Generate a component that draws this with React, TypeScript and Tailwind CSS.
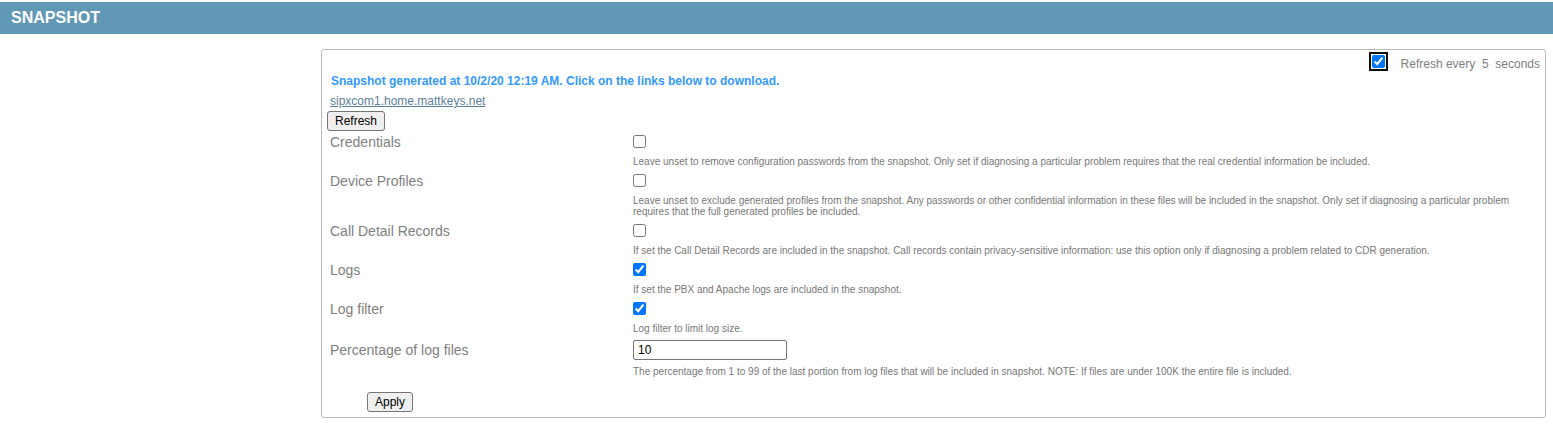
import React, { useState } from "react";

type Option = { id: string; label: string; help: string; checked: boolean };

const options: Option[] = [
  { id: "credentials", label: "Credentials", checked: false, help: "Leave unset to remove configuration passwords from the snapshot. Only set if diagnosing a particular problem requires that the real credential information be included." },
  { id: "profiles", label: "Device Profiles", checked: false, help: "Leave unset to exclude generated profiles from the snapshot. Any passwords or other confidential information in these files will be included in the snapshot. Only set if diagnosing a particular problem requires that the full generated profiles be included." },
  { id: "cdr", label: "Call Detail Records", checked: false, help: "If set the Call Detail Records are included in the snapshot. Call records contain privacy-sensitive information: use this option only if diagnosing a problem related to CDR generation." },
  { id: "logs", label: "Logs", checked: true, help: "If set the PBX and Apache logs are included in the snapshot." },
  { id: "filter", label: "Log filter", checked: true, help: "Log filter to limit log size." },
];

const button = "h-5 rounded-[3px] border border-[#767676] bg-[#efefef] px-[7px] text-xs leading-none text-black";
const row = "grid grid-cols-[303px_minmax(0,1fr)]";
const help = "text-[10px] leading-[11px] text-[#777]";

export default function App() {
  const [refresh, setRefresh] = useState(true);
  return (
    <div className="bg-white pt-[2px] font-['Liberation_Sans',Arial,sans-serif] text-[#808080]">
      <header className="flex h-8 items-center bg-[#6098b5] px-[11px]">
        <h1 className="text-base font-bold text-white">SNAPSHOT</h1>
      </header>
      <main className="mt-[15px] mr-[7px] ml-[321px] rounded-[3px] border border-[#bbb] px-[5px] pb-[5px]">
        <div className="flex h-6 items-baseline justify-end gap-4 pt-[5px] text-xs leading-[14px]">
          <input id="refresh" type="checkbox" checked={refresh} onChange={(e) => setRefresh(e.target.checked)} className="size-[13px] rounded-[2px] outline-2 outline-offset-1 outline-[#101010]" />
          <label htmlFor="refresh" className="whitespace-pre">Refresh every  5  seconds</label>
        </div>
        <p className="px-1 text-xs leading-[14px] font-bold text-[#3399ff]">Snapshot generated at 10/2/20 12:19 AM. Click on the links below to download.</p>
        <div className="mt-[6px] flex px-[3px] text-xs leading-[14px]">
          <a href="#download" className="text-[#5a7f9a] underline">sipxcom1.home.mattkeys.net</a>
        </div>
        <button type="button" className={`mt-[3px] block ${button}`}>Refresh</button>
        <form onSubmit={(e) => e.preventDefault()} className="px-[3px]">
          {options.map((o) => (
            <div key={o.id} className={`${row} pb-[3px]`}>
              <label htmlFor={o.id} className="text-sm leading-[22px]">{o.label}</label>
              <div>
                <div className="flex h-[25px] items-start pt-1">
                  <input id={o.id} type="checkbox" defaultChecked={o.checked} className="size-[13px]" />
                </div>
                <p className={help}>{o.help}</p>
              </div>
            </div>
          ))}
          <div className={`${row} pt-[3px]`}>
            <label htmlFor="percent" className="text-sm leading-5">Percentage of log files</label>
            <div>
              <div className="flex h-[26px] items-start">
                <input id="percent" defaultValue="10" className="h-5 w-[154px] rounded-[2px] border border-[#767676] bg-white px-1 text-xs text-black" />
              </div>
              <p className={help}>{"The percentage from 1 to 99 of the last portion from log files that will be included in snapshot. NOTE: If files are under 100K the entire file is included."}</p>
            </div>
          </div>
          <button type="submit" className={`mt-[15px] ml-[37px] block ${button}`}>Apply</button>
        </form>
      </main>
    </div>
  );
}
